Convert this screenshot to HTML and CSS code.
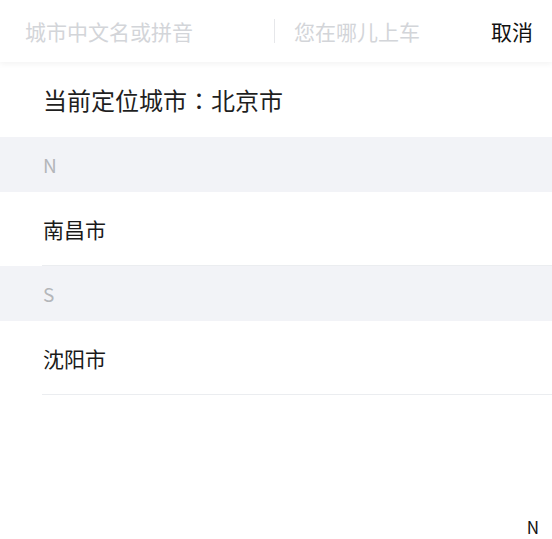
FILE: index.html
```html
<!DOCTYPE html>
<html lang="zh-CN">
<head>
    <meta charset="UTF-8">
    <meta name="viewport" content="width=device-width, initial-scale=1.0">
    <title>选择城市</title>
    <link rel="stylesheet" href="styles.css">
</head>
<body>
    <div class="search-bar">
        <input class="city-input" type="text" placeholder="城市中文名或拼音">
        <div class="divider"></div>
        <input class="place-input" type="text" placeholder="您在哪儿上车">
        <div class="cancel">取消</div>
    </div>

    <div class="current">当前定位城市<span class="colon">：</span>北京市</div>

    <div class="group-title">N</div>
    <div class="city-item">南昌市</div>

    <div class="group-title">S</div>
    <div class="city-item">沈阳市</div>

    <div class="index-hint">N</div>
</body>
</html>
```

FILE: styles.css
```css
body {
    margin: 0;
    font-family: "Noto Sans CJK SC", "Noto Sans", sans-serif;
    background: #fff;
    color: #1a1a1a;
}
.search-bar {
    height: 62px;
    display: flex;
    align-items: center;
    padding: 0 19px 0 25px;
    background: #fff;
    box-shadow: 0 2px 6px rgba(0, 0, 0, 0.05);
    position: relative;
}
.search-bar input {
    border: none;
    outline: none;
    padding: 0;
    font-family: inherit;
    font-size: 21px;
    background: transparent;
    color: #333;
}
.search-bar input::placeholder {
    color: #d3d5d9;
}
.city-input {
    width: 249px;
}
.divider {
    width: 1px;
    height: 24px;
    background: #e6e7ea;
    margin-right: 19px;
}
.place-input {
    flex: 1;
    min-width: 0;
}
.cancel {
    font-size: 21px;
    color: #111;
}
.current {
    height: 75px;
    display: flex;
    align-items: center;
    padding-left: 43px;
    font-size: 24px;
    color: #1f1f1f;
}
.colon {
    font-family: "Noto Sans CJK TC", sans-serif;
}
.group-title {
    height: 55px;
    display: flex;
    align-items: center;
    padding-left: 43px;
    background: #f2f3f7;
    color: #b4b6ba;
    font-size: 19px;
}
.city-item {
    height: 73px;
    display: flex;
    align-items: center;
    margin-left: 42px;
    padding-left: 1px;
    border-bottom: 1px solid #ebedf0;
    font-size: 21px;
    color: #1a1a1a;
}
.index-hint {
    position: absolute;
    right: 13px;
    top: 519px;
    font-size: 17px;
    line-height: 16px;
    color: #111;
}
```
